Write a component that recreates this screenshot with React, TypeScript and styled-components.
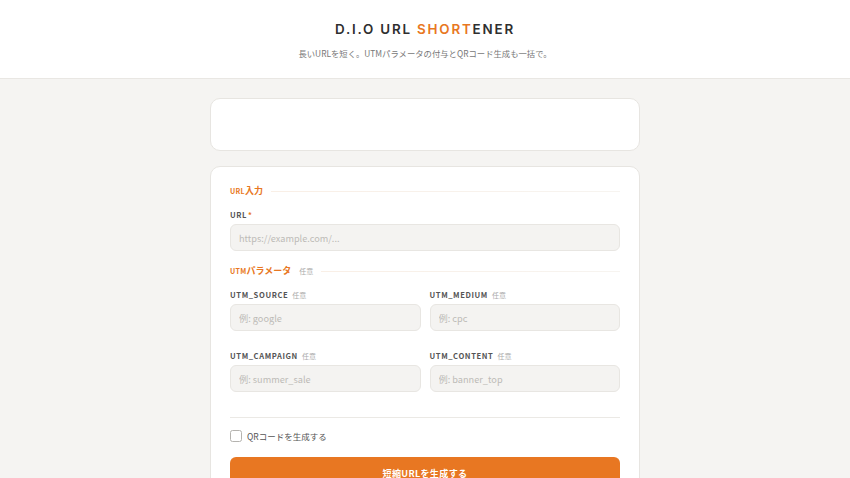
import React from "react";
import styled, { createGlobalStyle } from "styled-components";

const FONT = `"Noto Sans CJK JP", "Noto Sans", sans-serif`;

const Global = createGlobalStyle`
  html, body { margin: 0; padding: 0; }
  body {
    background: #f5f4f2;
    font-family: ${FONT};
    color: #333;
  }
  * { box-sizing: border-box; }
`;

const Header = styled.header`
  height: 79px;
  background: #fff;
  border-bottom: 1px solid #e9e7e3;
  display: flex;
  flex-direction: column;
  align-items: center;
  padding-top: 19px;
`;

const Title = styled.h1`
  margin: 0;
  font-family: "Inter", "Noto Sans", sans-serif;
  font-weight: 600;
  font-size: 13.4px;
  letter-spacing: 1.8px;
  color: #2f2f2f;
  line-height: 20px;
`;

const Accent = styled.span`
  color: #e87722;
`;

const Subtitle = styled.p`
  margin: 8px 0 0;
  font-size: 8.35px;
  color: #777;
  line-height: 12px;
`;

const Main = styled.main`
  width: 430px;
  margin: 0 auto;
  padding-top: 19px;
  display: flex;
  flex-direction: column;
  gap: 15px;
`;

const Card = styled.section<{ $h?: number }>`
  background: #fff;
  border: 1px solid #e7e5e1;
  border-radius: 10px;
  ${(p) => (p.$h ? `height: ${p.$h}px;` : "")}
`;

const FormCard = styled(Card)`
  padding: 18px 19px 20px;
`;

const SectionHead = styled.div<{ $mt?: number }>`
  display: flex;
  align-items: center;
  gap: 8px;
  margin-top: ${(p) => p.$mt ?? 0}px;
  height: 12px;
`;

const SectionTitle = styled.span`
  font-size: 9px;
  font-weight: 700;
  color: #e87722;
  white-space: nowrap;
  line-height: 12px;
`;

const SectionSmall = styled.span`
  font-size: 7px;
  letter-spacing: 0.3px;
`;

const Optional = styled.span`
  font-size: 7px;
  color: #aaa;
  font-weight: 400;
  white-space: nowrap;
  letter-spacing: 0;
`;

const SectionRule = styled.div`
  flex: 1;
  height: 1px;
  background: linear-gradient(to right, #f9efe6, #f7f4f0);
`;

const Field = styled.div<{ $mt?: number }>`
  display: flex;
  flex-direction: column;
  margin-top: ${(p) => p.$mt ?? 0}px;
`;

const Label = styled.label`
  display: flex;
  align-items: center;
  gap: 4px;
  font-size: 7.6px;
  font-weight: 700;
  letter-spacing: 0.6px;
  color: #555;
  height: 10px;
  line-height: 10px;
  margin-bottom: 4px;
`;

const Required = styled.span`
  color: #e87722;
  letter-spacing: 0;
  margin-left: -3px;
`;

const Input = styled.input`
  width: 100%;
  height: 27px;
  border: 1px solid #e8e6e2;
  background: #f4f3f1;
  border-radius: 6px;
  padding: 0 8px;
  font-family: ${FONT};
  font-size: 9.2px;
  color: #333;
  outline: none;
  &::placeholder { color: #bdbbb7; }
`;

const Grid = styled.div<{ $mt: number }>`
  display: grid;
  grid-template-columns: 1fr 1fr;
  column-gap: 9px;
  margin-top: ${(p) => p.$mt}px;
`;

const Divider = styled.hr`
  border: 0;
  height: 1px;
  background: #ebe9e5;
  margin: 25px 0 0;
`;

const CheckRow = styled.label`
  display: flex;
  align-items: center;
  gap: 5px;
  height: 12px;
  margin-top: 12px;
  font-size: 8.5px;
  color: #555;
`;

const Box = styled.span`
  width: 12px;
  height: 12px;
  border: 1.3px solid #b5b3af;
  border-radius: 2.5px;
  background: #fff;
`;

const Button = styled.button`
  width: 100%;
  height: 31px;
  margin-top: 15px;
  border: 0;
  border-radius: 6px;
  background: #e87722;
  color: #fff;
  font-family: ${FONT};
  font-weight: 700;
  font-size: 9.1px;
  letter-spacing: 0.3px;
`;

const UtmField = ({ name, ph }: { name: string; ph: string }) => (
  <Field>
    <Label>
      {name} <Optional>任意</Optional>
    </Label>
    <Input placeholder={ph} />
  </Field>
);

export default function App() {
  return (
    <>
      <Global />
      <Header>
        <Title>
          D.I.O URL <Accent>SHORT</Accent>ENER
        </Title>
        <Subtitle>長いURLを短く。UTMパラメータの付与とQRコード生成も一括で。</Subtitle>
      </Header>
      <Main>
        <Card $h={53} />
        <FormCard>
          <SectionHead>
            <SectionTitle>
              <SectionSmall>URL</SectionSmall>入力
            </SectionTitle>
            <SectionRule />
          </SectionHead>
          <Field $mt={13}>
            <Label>
              URL <Required>*</Required>
            </Label>
            <Input placeholder="https://example.com/..." />
          </Field>
          <SectionHead $mt={14}>
            <SectionTitle>
              <SectionSmall>UTM</SectionSmall>パラメータ
            </SectionTitle>
            <Optional>任意</Optional>
            <SectionRule />
          </SectionHead>
          <Grid $mt={13}>
            <UtmField name="UTM_SOURCE" ph="例: google" />
            <UtmField name="UTM_MEDIUM" ph="例: cpc" />
          </Grid>
          <Grid $mt={20}>
            <UtmField name="UTM_CAMPAIGN" ph="例: summer_sale" />
            <UtmField name="UTM_CONTENT" ph="例: banner_top" />
          </Grid>
          <Divider />
          <CheckRow>
            <Box />
            QRコードを生成する
          </CheckRow>
          <Button>短縮URLを生成する</Button>
        </FormCard>
      </Main>
    </>
  );
}
